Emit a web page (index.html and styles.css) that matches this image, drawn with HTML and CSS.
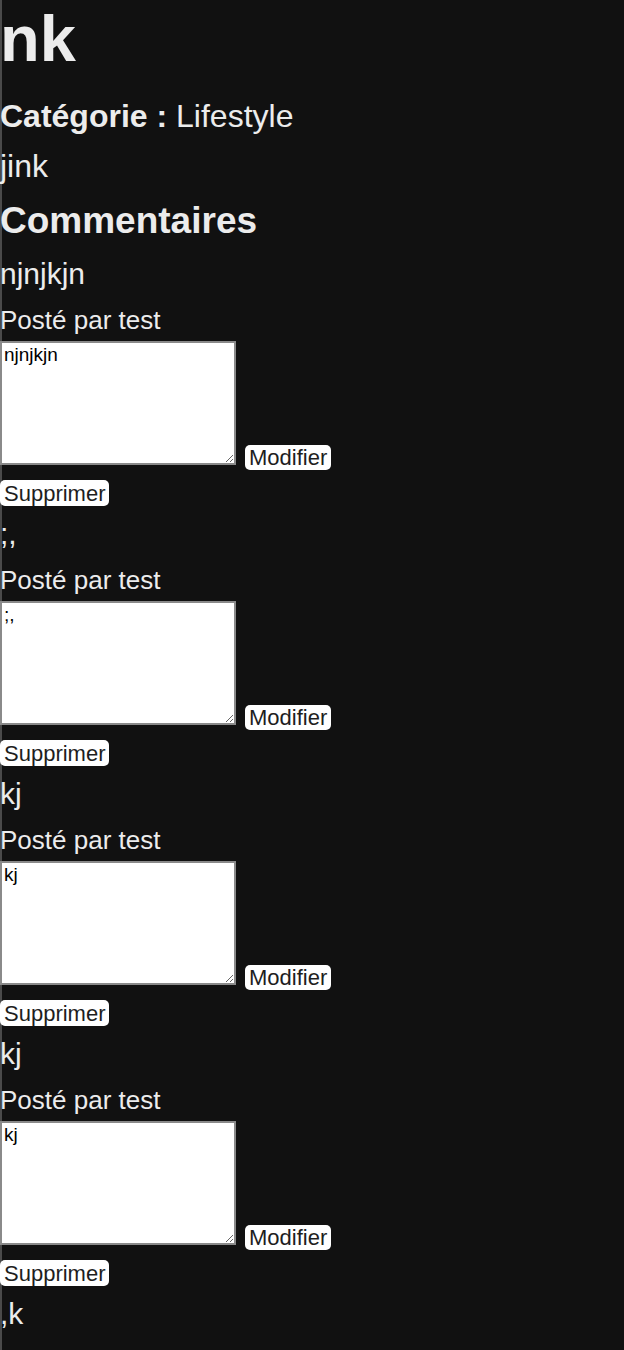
FILE: index.html
```html
<!DOCTYPE html>
<html lang="fr">

<head>
    <meta charset="UTF-8">
    <meta name="viewport" content="width=device-width, initial-scale=1.0">
    <title>nk</title>
    <link rel="stylesheet" href="styles.css">
</head>

<body>
    <div class="page">
        <h1 class="post-title">nk</h1>
        <p class="post-category"><strong>Catégorie :</strong> Lifestyle</p>
        <p class="post-body">jink</p>

        <h2 class="comments-title">Commentaires</h2>

        <div class="comment">
            <p class="comment-text">njnjkjn</p>
            <p class="comment-author">Posté par test</p>
            <form class="edit-row">
                <textarea class="comment-edit">njnjkjn</textarea>
                <button type="button" class="small-btn">Modifier</button>
            </form>
            <button type="button" class="small-btn delete-btn">Supprimer</button>
        </div>

        <div class="comment">
            <p class="comment-text">;,</p>
            <p class="comment-author">Posté par test</p>
            <form class="edit-row">
                <textarea class="comment-edit">;,</textarea>
                <button type="button" class="small-btn">Modifier</button>
            </form>
            <button type="button" class="small-btn delete-btn">Supprimer</button>
        </div>

        <div class="comment">
            <p class="comment-text">kj</p>
            <p class="comment-author">Posté par test</p>
            <form class="edit-row">
                <textarea class="comment-edit">kj</textarea>
                <button type="button" class="small-btn">Modifier</button>
            </form>
            <button type="button" class="small-btn delete-btn">Supprimer</button>
        </div>

        <div class="comment">
            <p class="comment-text">kj</p>
            <p class="comment-author">Posté par test</p>
            <form class="edit-row">
                <textarea class="comment-edit">kj</textarea>
                <button type="button" class="small-btn">Modifier</button>
            </form>
            <button type="button" class="small-btn delete-btn">Supprimer</button>
        </div>

        <div class="comment">
            <p class="comment-text">,k</p>
            <p class="comment-author">Posté par test</p>
            <form class="edit-row">
                <textarea class="comment-edit">,k</textarea>
                <button type="button" class="small-btn">Modifier</button>
            </form>
            <button type="button" class="small-btn delete-btn">Supprimer</button>
        </div>
    </div>
</body>

</html>
```

FILE: styles.css
```css
* {
    font-family: "Liberation Sans", Arial, Helvetica, sans-serif;
    box-sizing: border-box;
}

body {
    background-color: #111111;
    color: #ececec;
    margin: 0;
    overflow-x: hidden;
    /* thin grey edge on the left */
    box-shadow: inset 2px 0 0 #4a4a4a;
    min-height: 100vh;
}

.page {
    padding: 0;
}

.post-title {
    font-size: 65px;
    line-height: 75px;
    font-weight: bold;
    margin: 1px 0 0;
}

.post-category {
    font-size: 32px;
    line-height: 37px;
    margin: 22px 0 0;
}

.post-body {
    font-size: 32px;
    line-height: 37px;
    margin: 13px 0 0;
}

.comments-title {
    font-size: 37px;
    line-height: 42px;
    font-weight: bold;
    margin: 15px 0 0;
}

.comment {
    padding-top: 15px;
}

.comment + .comment {
    padding-top: 11px;
}

.comment-text {
    font-size: 30px;
    line-height: 34px;
    margin: 0;
}

.comment-author {
    font-size: 26px;
    line-height: 30px;
    margin: 14px 0 0;
}

.edit-row {
    display: flex;
    align-items: flex-end;
    gap: 9px;
    margin: 6px 0 0;
}

.comment-edit {
    width: 236px;
    height: 124px;
    margin: 0 0 5px;
    padding: 1px 2px;
    font-size: 19px;
    line-height: 22px;
    color: #000;
    background-color: #fff;
    border: 2px solid #8a8a8a;
    border-radius: 0;
    resize: both;
}

.small-btn {
    appearance: none;
    background-color: #fff;
    color: #1e1e1e;
    border: none;
    border-radius: 5px;
    font-size: 22px;
    line-height: 25px;
    padding: 0 4px;
    cursor: pointer;
}

.delete-btn {
    display: block;
    margin-top: 10px;
    height: 26px;
}
```
